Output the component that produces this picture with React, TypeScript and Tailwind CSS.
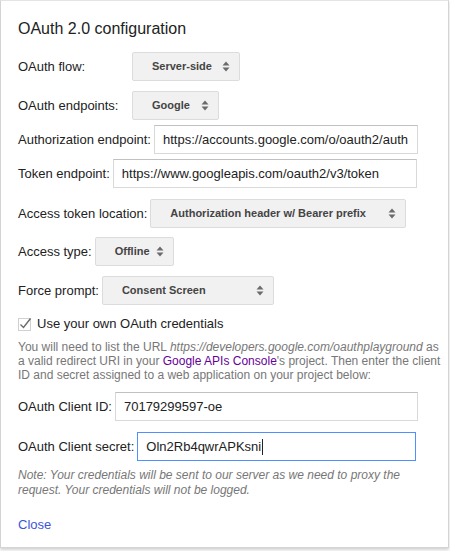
import React from "react";

const font = { fontFamily: '"Liberation Sans", Arial, sans-serif' };

function Arrows() {
  return (
    <svg width="8" height="11" viewBox="0 0 8 11" className="shrink-0">
      <path d="M4 0.5 L7.5 4.5 L0.5 4.5 Z" fill="#6b6b6b" />
      <path d="M4 10.5 L7.5 6.5 L0.5 6.5 Z" fill="#6b6b6b" />
    </svg>
  );
}

function Select({ value, width }: { value: string; width: string }) {
  return (
    <div
      className={`flex h-[29px] shrink-0 items-center justify-between rounded-[2px] border border-[#dcdcdc] bg-[#f1f1f1] pl-[19px] pr-[9px] text-[11px] font-bold text-[#444] ${width}`}
    >
      <span>{value}</span>
      <Arrows />
    </div>
  );
}

function Field({ value, width, focused = false }: { value: string; width: string; focused?: boolean }) {
  return (
    <div
      className={`flex h-[29px] shrink-0 items-center border bg-white pl-[8px] text-[13px] text-[#222] ${width} ${
        focused ? "border-[#4d90fe]" : "border-[#d9d9d9] border-t-[#c0c0c0]"
      }`}
    >
      <span>{value}</span>
      {focused ? <span className="ml-px inline-block h-[16px] w-px bg-[#222]" /> : null}
    </div>
  );
}

function Row({ label, children, labelWidth, className = "" }: { label: string; children: React.ReactNode; labelWidth?: string; className?: string }) {
  return (
    <div className={`flex items-center gap-[3px] ${className}`}>
      <span className={`shrink-0 text-[13px] text-[#222] ${labelWidth ?? ""}`}>{label}</span>
      {children}
    </div>
  );
}

export default function App() {
  return (
    <div className="h-[551px] w-[450px] bg-white" style={font}>
      <div className="h-[548px] w-[449px] border border-[#d4d4d4] border-t-[#e4e4e4] bg-white pl-[17px] pr-[8px] pt-[18px] shadow-[0_2px_3px_rgba(0,0,0,0.18)]">
        <h1 className="h-[20px] text-[16px] leading-[20px] text-[#222]">OAuth 2.0 configuration</h1>

        <Row label="OAuth flow:" labelWidth="w-[111px]" className="mt-[13px]">
          <Select value="Server-side" width="w-[108px]" />
        </Row>
        <Row label="OAuth endpoints:" labelWidth="w-[111px]" className="mt-[10px]">
          <Select value="Google" width="w-[87px]" />
        </Row>
        <Row label="Authorization endpoint:" className="mt-[5px]">
          <Field value="https://accounts.google.com/o/oauth2/auth" width="w-[264px]" />
        </Row>
        <Row label="Token endpoint:" className="mt-[5px]">
          <Field value="https://www.googleapis.com/oauth2/v3/token" width="w-[304px]" />
        </Row>
        <Row label="Access token location:" className="mt-[11px]">
          <Select value="Authorization header w/ Bearer prefix" width="w-[256px]" />
        </Row>
        <Row label="Access type:" className="mt-[9px]">
          <Select value="Offline" width="w-[79px]" />
        </Row>
        <Row label="Force prompt:" className="mt-[10px]">
          <Select value="Consent Screen" width="w-[172px]" />
        </Row>

        <label className="mt-[11px] flex h-[16px] items-center gap-[5px] text-[13px] text-[#222]">
          <svg width="14" height="14" viewBox="0 0 14 14" className="shrink-0">
            <rect x="0.5" y="1.5" width="12" height="12" fill="#fff" stroke="#d0d0d0" />
            <path d="M2.5 7.5 L5.5 10.5 L12.5 1.5" fill="none" stroke="#6a6a6a" strokeWidth="1.4" />
          </svg>
          <span>Use your own OAuth credentials</span>
        </label>

        <p className="mt-[8px] whitespace-nowrap text-[12px] leading-[14px] text-[#777]">
          You will need to list the URL <i>https://developers.google.com/oauthplayground</i> as
          <br />
          a valid redirect URI in your <a className="text-[#660099]">Google APIs Console</a>'s project. Then enter the client
          <br />
          ID and secret assigned to a web application on your project below:
        </p>

        <Row label="OAuth Client ID:" className="mt-[10px]">
          <Field value="70179299597-oe" width="w-[303px]" />
        </Row>
        <Row label="OAuth Client secret:" className="mt-[11px]">
          <Field value="Oln2Rb4qwrAPKsni" width="w-[279px]" focused />
        </Row>

        <p className="mt-[7px] pr-[10px] text-[12px] leading-[15px] italic text-[#777]">
          Note: Your credentials will be sent to our server as we need to proxy the request. Your credentials will not be logged.
        </p>

        <a className="mt-[19px] block text-[13px] leading-[16px] text-[#3b55d9]">Close</a>
      </div>
    </div>
  );
}
